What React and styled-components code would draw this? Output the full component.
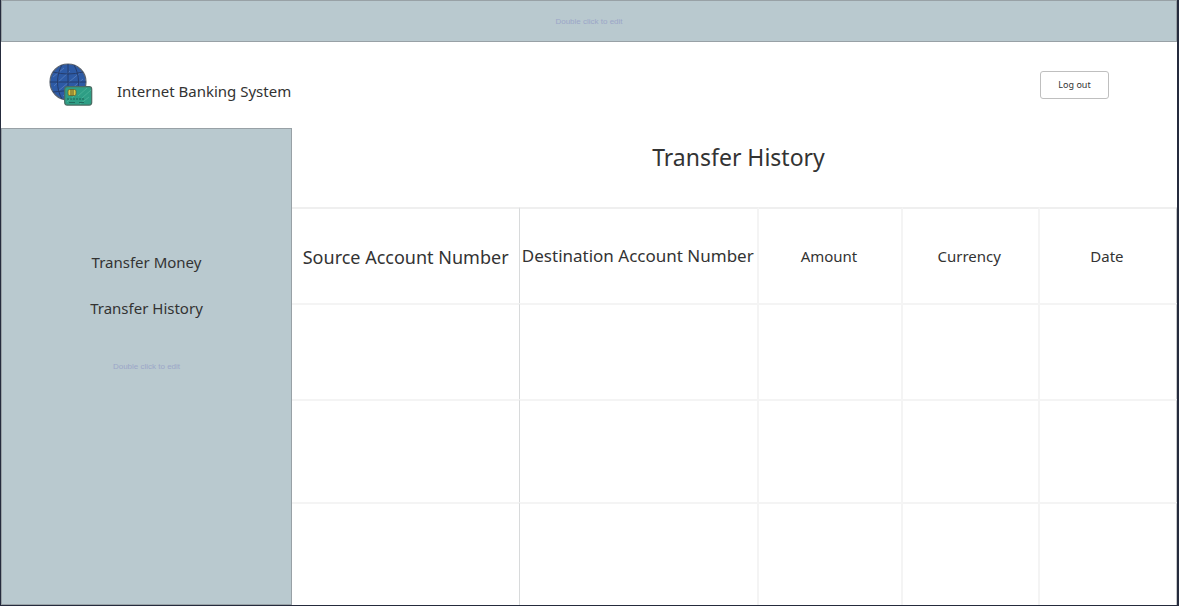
import React from "react";
import styled, { createGlobalStyle } from "styled-components";

const Global = createGlobalStyle`
  *, *::before, *::after { box-sizing: border-box; }
  body {
    margin: 0;
    background: #ffffff;
    color: #333333;
    font-family: "Segoe UI", "Noto Sans", sans-serif;
  }
`;

const Page = styled.div`
  display: flex;
  flex-direction: column;
  min-height: 100vh;
  border: solid #252b3d;
  border-width: 0 2px 1px 1px;
`;

const Banner = styled.div`
  display: flex;
  align-items: center;
  justify-content: center;
  height: 42px;
  padding-top: 2px;
  border: 1px solid #98a1a6;
  background: #b9c9cf;
`;

const Hint = styled.p`
  margin: 0;
  color: #9ba6c8;
  font: 8px/12px "Liberation Sans", Arial, sans-serif;
  text-align: center;
`;

const Header = styled.header`
  display: flex;
  align-items: flex-start;
  justify-content: space-between;
  height: 86px;
  padding: 20px 68px 0 46px;
`;

const Brand = styled.div`
  display: flex;
  gap: 22px;
`;

const BrandName = styled.span`
  padding-top: 17px;
  font-size: 15px;
  line-height: 24px;
`;

const LogOutButton = styled.button`
  width: 69px;
  height: 28px;
  margin-top: 9px;
  padding: 0;
  border: 1px solid #bfbfbf;
  border-radius: 3px;
  background: #ffffff;
  color: #333333;
  font-family: inherit;
  font-size: 9px;
  line-height: 12px;
  cursor: pointer;
`;

const Body = styled.div`
  display: flex;
  flex: 1;
`;

const Sidebar = styled.nav`
  display: flex;
  flex: 0 0 291px;
  flex-direction: column;
  align-items: center;
  gap: 22px;
  padding-top: 121px;
  border: 1px solid #98a1a6;
  background: #b9c9cf;

  ${Hint} { margin-top: 19px; }
`;

const NavLink = styled.a`
  color: #333333;
  font-size: 15px;
  line-height: 24px;
  text-decoration: none;
`;

const Main = styled.main`
  display: flex;
  flex: 1;
  flex-direction: column;
  min-width: 0;
`;

const Title = styled.h1`
  height: 79px;
  margin: 0;
  padding: 13px 0 0 8px;
  font-size: 23px;
  font-weight: 400;
  line-height: 32px;
  text-align: center;
`;

const Table = styled.table`
  flex: 1;
  display: table;
  width: 100%;
  border-spacing: 0;
  table-layout: fixed;
`;

const Col = styled.col`
  width: ${({ $share }) => $share}%;
`;

const Row = styled.tr`
  height: ${({ $height }) => $height}px;
`;

const cellLine = ({ $strong }) => ($strong ? "1px solid #d8dadb" : "2px solid #f4f4f4");

const HeadCell = styled.th`
  padding: 0 2px 0 0;
  border-top: 2px solid #efefef;
  border-right: ${cellLine};
  font-size: ${({ $size }) => $size}px;
  font-weight: 400;
  line-height: 24px;
  text-align: center;
  white-space: nowrap;

  &:first-child { padding: 2px 0 0; }
  &:last-child { border-right: 1px solid #c6c8ca; }
`;

const Cell = styled.td`
  padding: 0;
  border-top: 2px solid #f4f4f4;
  border-right: ${cellLine};

  &:last-child { border-right: 1px solid #c6c8ca; }
`;

const columns = [
  { label: "Source Account Number", share: 25.8, size: 18, strong: true },
  { label: "Destination Account Number", share: 27, size: 17 },
  { label: "Amount", share: 16.2, size: 15 },
  { label: "Currency", share: 15.5, size: 15 },
  { label: "Date", share: 15.5, size: 15 },
];

const rowHeights = [96, 102, 103];

function BankLogo() {
  return (
    <svg width="48" height="46" viewBox="0 0 48 46" fill="none" aria-hidden="true">
      <circle cx="21" cy="20" r="18" fill="#2d5aa5" stroke="#59626e" strokeWidth="1.2" />
      <g stroke="#6387c3" strokeWidth="1" opacity=".65">
        <path d="M6 15 17 6M7 24 23 9M10 30 34 10M16 34 36 17M24 35 37 25" />
      </g>
      <g stroke="#253d6c" strokeWidth="1">
        <path d="M21 2v36M6 10q15 4 30 0M3 20h36M6 30q15-3 30 0" />
        <path d="M15 3C9 13 9 27 15 37M27 3c6 10 6 24 0 34" />
      </g>
      <rect x="17.7" y="24.7" width="27" height="18.4" rx="2.5" fill="#2e9e85" stroke="#4b6b62" strokeWidth="1.2" />
      <path d="m31 34 9-8m-5 10 9-8m-24 12 7-6m6 8 9-7" stroke="#59bca2" opacity=".6" />
      <rect x="21" y="27.5" width="8" height="6" rx="1.5" fill="#d9c743" stroke="#65632f" strokeWidth=".8" />
      <path d="M24 27.5v6m2-6v6" stroke="#605a29" />
      <path d="M20 37h17" stroke="#1c6055" strokeDasharray="2 1" />
      <path d="M22 40.5h6m4 0h5" stroke="#206d5f" />
    </svg>
  );
}

export default function App() {
  return (
    <>
      <Global />
      <Page>
        <Banner>
          <Hint>Double click to edit</Hint>
        </Banner>
        <Header>
          <Brand>
            <BankLogo />
            <BrandName>Internet Banking System</BrandName>
          </Brand>
          <LogOutButton type="button">Log out</LogOutButton>
        </Header>
        <Body>
          <Sidebar>
            <NavLink href="#transfer-money">Transfer Money</NavLink>
            <NavLink href="#transfer-history">Transfer History</NavLink>
            <Hint>Double click to edit</Hint>
          </Sidebar>
          <Main>
            <Title>Transfer History</Title>
            <Table>
              <colgroup>
                {columns.map((c) => <Col key={c.label} $share={c.share} />)}
              </colgroup>
              <thead>
                <Row $height={96}>
                  {columns.map((c) => (
                    <HeadCell key={c.label} scope="col" $size={c.size} $strong={c.strong}>
                      {c.label}
                    </HeadCell>
                  ))}
                </Row>
              </thead>
              <tbody>
                {rowHeights.map((height, i) => (
                  <Row key={i} $height={height}>
                    {columns.map((c) => <Cell key={c.label} $strong={c.strong} />)}
                  </Row>
                ))}
              </tbody>
            </Table>
          </Main>
        </Body>
      </Page>
    </>
  );
}
